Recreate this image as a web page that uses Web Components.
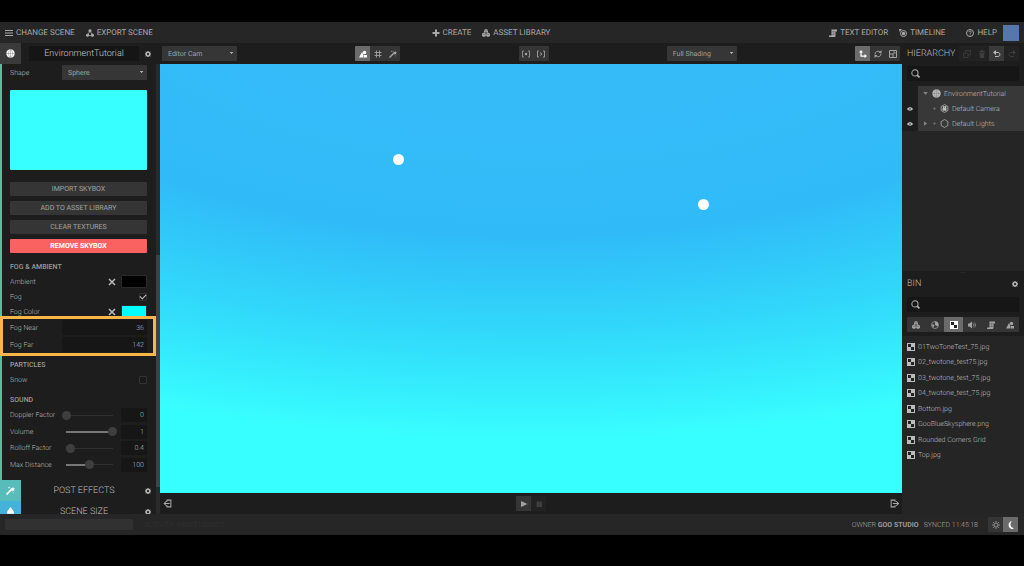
<!DOCTYPE html>
<html lang="en">
<head>
<meta charset="utf-8">
<title>EnvironmentTutorial</title>
<style>
  html, body { margin: 0; background: #000; }
  body { font: 8px/12px Roboto, sans-serif; color: #a8a8a8; text-rendering: geometricPrecision; }
</style>
</head>
<body>
<scene-editor></scene-editor>
<script>
const BASE = `
  :host, *, *::before, *::after { box-sizing: border-box; }
  button, input, select { font: inherit; text-rendering: inherit; color: inherit; margin: 0; padding: 0; border: 0; border-radius: 0; background: none; appearance: none; outline: 0; }
  ul { list-style: none; margin: 0; padding: 0; }
  h2, h3 { margin: 0; font-weight: 400; }
  a { color: inherit; text-decoration: none; }
`;
function define(tag, css, html) {
  customElements.define(tag, class extends HTMLElement {
    constructor() {
      super();
      this.attachShadow({ mode: 'open' });
    }
    connectedCallback() {
      const t = document.createElement('template');
      t.innerHTML = '<style>' + BASE + css + '</style>' + (typeof html === 'function' ? html(this) : html);
      this.shadowRoot.replaceChildren(t.content.cloneNode(true));
    }
  });
}

const ICONS = {
  menu: '<path d="M0 2h16v2H0zM0 7h16v2H0zM0 12h16v2H0z"/>',
  triad: '<path d="M8 3L3 13h10z" fill="none" stroke="currentColor" stroke-width="1.5"/><path d="M8 0l3 2v3L8 7 5 5V2zM3 9l3 2v3l-3 2-3-2v-3zM13 9l3 2v3l-3 2-3-2v-3z"/>',
  plus: '<path d="M6 1h4v5h5v4h-5v5H6v-5H1V6h5z"/>',
  boxes: '<path d="M8 0l4 2v5H4V2zM4 7l4 2v5l-4 2-4-2V9zM12 7l4 2v5l-4 2-4-2V9z"/><path d="M4 3l4 1 4-1M1 10l3 1 4-2 4 2 3-1M8 9v6" fill="none" stroke="#333" stroke-width=".8"/>',
  script: '<path d="M5 1h11v4h-3v8c0 2-1 3-3 3H0v-3h5z"/><path d="M7 5h4M7 8h4M7 11h4" stroke="#333" stroke-width="1"/>',
  timeline: '<circle cx="9" cy="9" r="6" fill="none" stroke="currentColor" stroke-width="2"/><circle cx="9" cy="9" r="3.500"/><path d="M0 0h6L1 6z"/>',
  help: '<circle cx="8" cy="8" r="7" fill="none" stroke="currentColor" stroke-width="2"/><path d="M5.500 6.500c0-3.500 5-3.500 5 0 0 2-2.500 1.500-2.500 3.500M8 11v2" fill="none" stroke="currentColor" stroke-width="1.700"/>',
  globe: '<circle cx="8" cy="8" r="7.500"/><path d="M8 0v16M0 8h16M8 0C3 5 3 11 8 16M8 0c5 5 5 11 0 16" fill="none" stroke="#777" stroke-width=".8"/>',
  gear: '<circle cx="8" cy="8" r="5" fill="none" stroke="currentColor" stroke-width="4"/><path d="M8 0v3M8 13v3M0 8h3M13 8h3M2 2l3 3M11 11l3 3M14 2l-3 3M2 14l3-3" stroke="currentColor" stroke-width="2.500"/>',
  shapes: '<path d="M0 15L6 4l3 6v5zM10 15v-5h6v5z"/><circle cx="11" cy="5" r="3.500"/>',
  grid: '<path d="M5 1v14M11 1v14M1 5h14M1 11h14" stroke="currentColor" stroke-width="1.800"/>',
  wand: '<path d="M1 15L10 6" stroke="currentColor" stroke-width="3"/><path d="M8 3l3 1 2-3 0 3 3 0-2 2 1 3-3-1-1 2-1-3z"/><path d="M4 3h3M12 12h2M5.500 1v3" stroke="currentColor"/>',
  snapdot: '<path d="M4 2H1v12h3M12 2h3v12h-3" fill="none" stroke="currentColor" stroke-width="1.600"/><circle cx="8" cy="8" r="2.500"/>',
  snapnext: '<path d="M4 2H1v12h3M12 2h3v12h-3M6 5l4 3-4 3" fill="none" stroke="currentColor" stroke-width="1.800"/>',
  move: '<path d="M4 3v9h9" fill="none" stroke="currentColor" stroke-width="2.500"/><path d="M0 5l4-5 4 5zM11 8l5 4-5 4z"/>',
  rotate: '<path d="M2 9a6 6 0 0 1 10-5M14 7a6 6 0 0 1-10 5" fill="none" stroke="currentColor" stroke-width="2"/><path d="M9 6h6V0zM7 10H1v6z"/>',
  scale: '<path d="M1 1h14v14H1zM1 8h7v7" fill="none" stroke="currentColor" stroke-width="2"/><path d="M7 9l4-4M8 4h4v4" fill="none" stroke="currentColor" stroke-width="1.500"/>',
  copy: '<path d="M1 6h9v9H1zM5 6V1h10v9h-5" fill="none" stroke="currentColor" stroke-width="1.600"/>',
  trash: '<path d="M2 2h4V0h4v2h4v2H2zM3 5h10l-1 11H4z"/>',
  undo: '<path d="M2 5h8c5 0 5 8 0 8H4" fill="none" stroke="currentColor" stroke-width="2"/><path d="M6 0v10L0 5z"/>',
  redo: '<path d="M14 5H6c-5 0-5 8 0 8h6" fill="none" stroke="currentColor" stroke-width="2"/><path d="M10 0v10l6-5z"/>',
  search: '<circle cx="7" cy="7" r="5.500" fill="none" stroke="currentColor" stroke-width="1.800"/><path d="M11 11l4 4" stroke="currentColor" stroke-width="3"/>',
  eye: '<path d="M0 8c4-6 12-6 16 0-4 6-12 6-16 0z"/><circle cx="8" cy="8" r="2" fill="#1d1d1d"/>',
  down: '<path d="M1 3h14L8 13z"/>',
  right: '<path d="M3 1v14l10-7z"/>',
  dot: '<circle cx="8" cy="8" r="6"/>',
  camera: '<path d="M8 1l6 3.500v7L8 15l-6-3.500v-7z" fill="none" stroke="currentColor" stroke-width="1.300"/><path d="M4.500 7h7v5h-7z"/><circle cx="6.500" cy="5.500" r="1.800"/><circle cx="9.800" cy="5.500" r="1.800"/>',
  hex: '<path d="M8 1l6 3.500v7L8 15l-6-3.500v-7z" fill="none" stroke="currentColor" stroke-width="1.300"/>',
  sphere: '<circle cx="8" cy="8" r="7" fill="none" stroke="currentColor" stroke-width="1.500"/><path d="M8 1c7 0 8 6 5 10L8 8zM3 6l4 2-2 5c-3-2-3-5-2-7z"/>',
  check: '<path d="M0 0h16v16H0z"/><path d="M2 2h6v6H2zM8 8h6v6H8z" fill="#222"/>',
  sound: '<path d="M0 5h3l5-4v14l-5-4H0z"/><path d="M10 5c2 2 2 4 0 6M12 3c4 3 4 7 0 10" fill="none" stroke="currentColor" stroke-width="1.600"/>',
  enter: '<path d="M7 5V2h7v12H7v-3M12 8H2M6 4L2 8l4 4" fill="none" stroke="currentColor" stroke-width="1.800"/>',
  exit: '<path d="M9 5V2H2v12h7v-3M5 8h10M11 4l4 4-4 4" fill="none" stroke="currentColor" stroke-width="1.800"/>',
  play: '<path d="M2 2v12l13-6z"/>',
  stop: '<path d="M3 3h11v11H3z"/>',
  sun: '<circle cx="8" cy="8" r="4" fill="none" stroke="currentColor" stroke-width="1.800"/><path d="M8 0v3M8 13v3M0 8h3M13 8h3M2 2l2 2M12 12l2 2M14 2l-2 2M2 14l2-2" stroke="currentColor" stroke-width="1.600"/>',
  moon: '<path d="M10 0C1 1 1 15 10 16c2 0 3-1 4-2-8 0-9-10-4-14z"/>',
  cross: '<path d="M2 2l12 12M14 2L2 14" stroke="currentColor" stroke-width="3"/>',
  tent: '<path d="M8 0c2 4 7 6 6 12H2C1 6 6 4 8 0z"/>'
};
define('ed-icon', `
  :host { display: inline-block; flex: none; width: var(--s, 9px); height: var(--s, 9px); }
  svg { display: block; width: 100%; height: 100%; fill: currentColor; }`,
  el => `<svg viewBox="0 0 16 16" aria-hidden="true">${ICONS[el.getAttribute('name')]}</svg>`);

define('ed-menu-link', `
  :host { display: block; --s: 8px; }
  a { display: flex; align-items: center; gap: 3px; height: 21px; white-space: nowrap; color: #a8a8a8; }`,
  el => `<a href="#"><ed-icon name="${el.getAttribute('icon')}"></ed-icon><slot></slot></a>`);

define('ed-topbar', `
  :host { display: flex; justify-content: space-between; height: 21px; padding: 0 5px; background: #262626; }
  nav { display: flex; align-items: center; gap: 11px; }
  .help { margin-left: 10px; }
  .user { width: 16px; height: 16px; background: #5577ad; margin-left: -5px; }`,
  `<nav><ed-menu-link icon="menu">CHANGE SCENE</ed-menu-link><ed-menu-link icon="triad">EXPORT SCENE</ed-menu-link></nav>
   <nav><ed-menu-link icon="plus">CREATE</ed-menu-link><ed-menu-link icon="boxes">ASSET LIBRARY</ed-menu-link></nav>
   <nav><ed-menu-link icon="script">TEXT EDITOR</ed-menu-link><ed-menu-link icon="timeline">TIMELINE</ed-menu-link><ed-menu-link class="help" icon="help">HELP</ed-menu-link><button class="user" aria-label="Account"></button></nav>`);

/* icons="a b c": a leading * marks the pressed tool, a leading - a disabled one */
define('ed-tools', `
  :host { display: flex; height: 15px; background: #353535; border-radius: 1px; overflow: hidden; }
  :host([flat]) { background: #222; }
  button { flex: 1 0 15px; height: 15px; display: grid; place-items: center; --s: 8px; color: #a2a2a2; }
  .on { background: #6b6b6b; color: #fff; }
  :host([flat]) .on { background: #3a3a3a; color: #bbb; }
  button:disabled { color: #3d3d3d; background: #222; }`,
  el => el.getAttribute('icons').split(' ').map(n => {
    const name = n.replace(/^[*-]/, '');
    return `<button aria-label="${name}" ${n[0] === '*' ? 'class="on"' : n[0] === '-' ? 'disabled' : ''}><ed-icon name="${name}"></ed-icon></button>`;
  }).join(''));

define('ed-select', `
  :host { display: block; height: 15px; }
  label { display: flex; align-items: center; font-weight: 300; color: #b4b4b4; font-size: 7px; }
  label span { width: 52px; }
  select { display: block; flex: 1; min-width: 0; height: 15px; padding: 1px 12px 0 6px; border-radius: 1px; font-size: 7px; font-weight: 400; line-height: 14px; color: #a0a0a0;
    background: linear-gradient(#aaa, #aaa) right 5px top 7px / 1px 1px no-repeat, linear-gradient(#aaa, #aaa) right 4px top 6px / 3px 1px no-repeat, #363636; }`,
  el => `<label>${el.hasAttribute('labelled') ? `<span>${el.getAttribute('label')}</span>` : ''}<select aria-label="${el.getAttribute('label')}"><option>${el.getAttribute('value')}</option></select></label>`);

define('ed-heading', `
  :host { display: block; }
  h3 { font-size: 7px; line-height: 14px; font-weight: 500; color: #9a9a9a; }`,
  '<h3><slot></slot></h3>');

const ROW = `
  :host { display: flex; align-items: center; height: 15px; font-size: 7px; font-weight: 300; color: #b4b4b4; }
  label { width: 52px; flex: none; white-space: nowrap; }`;

define('ed-number', ROW + `
  :host { height: 17px; }
  input { flex: 1; min-width: 0; height: 15px; padding-right: 3px; text-align: right; background: #161616; border-radius: 1px; }`,
  el => `<label for="v">${el.getAttribute('label')}</label><input id="v" value="${el.getAttribute('value')}">`);

define('ed-check', ROW + `
  :host { justify-content: space-between; }
  input { position: relative; width: 8px; height: 8px; border: 1px solid #343434; border-radius: 1px; background: #1a1a1a; }
  input:checked::after { content: ""; position: absolute; left: 0; top: 0; width: 6px; height: 4px; border: solid #c4c4c4; border-width: 0 0 1px 1px; transform: rotate(-45deg); }`,
  el => `<label for="v">${el.getAttribute('label')}</label><input id="v" type="checkbox" ${el.hasAttribute('checked') ? 'checked' : ''}>`);

define('ed-color', ROW + `
  label { flex: 1; }
  button { display: grid; place-items: center; width: 8px; height: 8px; margin-right: 5px; --s: 8px; color: #bbb; }
  input { width: 26px; height: 13px; border: 1px solid #2c2c2c; border-radius: 1px; }
  input::-webkit-color-swatch-wrapper { padding: 0; }
  input::-webkit-color-swatch { border: 0; }`,
  el => `<label for="v">${el.getAttribute('label')}</label><button aria-label="Reset"><ed-icon name="cross"></ed-icon></button><input id="v" type="color" value="${el.getAttribute('value')}">`);

define('ed-slider', ROW + `
  :host { height: auto; }
  input[type=range] { width: 55px; height: 12px; margin-right: 4px;
    background: linear-gradient(#777, #777) 4px center / calc(46px * var(--p)) 2px no-repeat, linear-gradient(#303030, #303030) center / 46px 1px no-repeat; }
  input::-webkit-slider-thumb { appearance: none; width: 9px; height: 9px; border-radius: 50%; background: #3e3e3e; }
  .num { flex: 1; min-width: 0; height: 14px; padding-right: 3px; text-align: right; background: #161616; border-radius: 1px; }`,
  el => {
    const l = el.getAttribute('label'), p = el.getAttribute('at');
    return `<label for="r">${l}</label><input id="r" type="range" min="0" max="100" value="${p}" style="--p:${p / 100}"><input class="num" aria-label="${l} value" value="${el.getAttribute('value')}">`;
  });

define('ed-section-bar', `
  :host { display: flex; align-items: center; height: 21px; flex: none; background: #1d1d1d; }
  .tile { width: 21px; height: 21px; flex: none; display: grid; place-items: center; color: #fff; background: var(--tile, #3a3a3a); --s: 9px; }
  h2 { flex: 1; margin-left: 8px; font-size: 9px; font-weight: 300; line-height: 17px; padding-top: 2px; text-align: center; color: #bebebe; white-space: nowrap; }
  :host([boxed]) h2 { line-height: 13px; background: #151515; color: #c8c8c8; }
  .gear { width: 6px; height: 6px; margin: 0 5px 0 6px; display: grid; --s: 6px; color: #b5b5b5; }`,
  el => `<span class="tile"><ed-icon name="${el.getAttribute('icon')}"></ed-icon></span><h2><slot></slot></h2><button class="gear" aria-label="Options"><ed-icon name="gear"></ed-icon></button>`);

define('ed-inspector', `
  :host { display: grid; grid-template-columns: minmax(0, 1fr) 4px; grid-template-rows: 21px minmax(0, 1fr); background: #1d1d1d; min-height: 0; }
  .head { grid-column: 1 / 3; padding-right: 4px; }
  .scroll { overflow: hidden; }
  .body { height: 416px; border-left: 2px solid #58bd9b; padding: 1px 9px 0 8px; }
  .preview { height: 80px; margin: 10px 0 12px; background: #38ffff; border-radius: 1px; }
  .actions { display: grid; gap: 5px; margin-bottom: 7px; }
  .actions button { height: 14px; font-size: 7px; line-height: 14px; background: #353535; border-radius: 1px; color: #a2a2a2; }
  .actions .danger { background: #fa6262; color: #fff; font-weight: 700; }
  .fog { position: relative; margin-bottom: 5px; }
  .mark { position: absolute; inset: -3px -9px -3px -10px; border: 3px solid #f8b548; pointer-events: none; }
  .particles { margin-bottom: 6px; }
  .sound { display: grid; grid-template-columns: minmax(0, 1fr); grid-auto-rows: 1fr; height: 66px; }
  .track { background: #2a2a2a; display: flex; flex-direction: column; }
  .thumb { margin-top: 191px; height: 232px; background: #424242; }
  .fx { --tile: #57bcba; }
  .size { --tile: #45b2dc; }`,
  `<ed-section-bar class="head" boxed icon="globe">EnvironmentTutorial</ed-section-bar>
   <div class="scroll">
     <div class="body">
       <ed-select labelled label="Shape" value="Sphere"></ed-select>
       <div class="preview"></div>
       <div class="actions"><button>IMPORT SKYBOX</button><button>ADD TO ASSET LIBRARY</button><button>CLEAR TEXTURES</button><button class="danger">REMOVE SKYBOX</button></div>
       <ed-heading>FOG &amp; AMBIENT</ed-heading>
       <ed-color label="Ambient" value="#000000"></ed-color>
       <ed-check label="Fog" checked></ed-check>
       <ed-color label="Fog Color" value="#00ffff"></ed-color>
       <div class="fog"><ed-number label="Fog Near" value="36"></ed-number><ed-number label="Fog Far" value="142"></ed-number><div class="mark"></div></div>
       <ed-heading>PARTICLES</ed-heading>
       <ed-check class="particles" label="Snow"></ed-check>
       <ed-heading>SOUND</ed-heading>
       <div class="sound">
         <ed-slider label="Doppler Factor" at="0" value="0"></ed-slider>
         <ed-slider label="Volume" at="100" value="1"></ed-slider>
         <ed-slider label="Rolloff Factor" at="8" value="0.4"></ed-slider>
         <ed-slider label="Max Distance" at="50" value="100"></ed-slider>
       </div>
     </div>
     <ed-section-bar class="fx" icon="wand">POST EFFECTS</ed-section-bar>
     <ed-section-bar class="size" icon="tent">SCENE SIZE</ed-section-bar>
   </div>
   <div class="track"><div class="thumb"></div></div>`);

define('ed-viewport', `
  :host { display: flex; flex-direction: column; min-width: 0; background: #1d1d1d; }
  .bar { display: flex; align-items: center; justify-content: space-between; height: 21px; padding: 0 2px; flex: none; }
  .cam { width: 75px; } .shade { width: 70px; }
  .sky { position: relative; flex: 1; min-height: 0; background: radial-gradient(ellipse 140% 111% at 50% -23%, #36bbf9 30%, #30bbf8 57%, #31d8fa 77%, #38ffff 100%); }
  .light { position: absolute; width: 11px; height: 11px; margin: -5px; border-radius: 50%; background: #fff; }
  .foot { display: grid; grid-template-columns: 1fr auto 1fr; align-items: center; height: 21px; padding: 0 3px; }
  .foot > button { display: grid; justify-self: start; --s: 9px; color: #a8a8a8; }
  .foot > button:last-child { justify-self: end; }`,
  `<div class="bar">
     <ed-select class="cam" label="Camera" value="Editor Cam"></ed-select>
     <ed-tools icons="*shapes grid wand"></ed-tools>
     <ed-tools icons="snapdot snapnext"></ed-tools>
     <ed-select class="shade" label="Shading" value="Full Shading"></ed-select>
     <ed-tools icons="*move rotate scale"></ed-tools>
   </div>
   <div class="sky"><span class="light" style="left:32.1%;top:22.1%"></span><span class="light" style="left:73.2%;top:32.6%"></span></div>
   <div class="foot"><button aria-label="Collapse left"><ed-icon name="enter"></ed-icon></button><ed-tools icons="play -stop"></ed-tools><button aria-label="Collapse right"><ed-icon name="exit"></ed-icon></button></div>`);

define('ed-search', `
  :host { display: flex; align-items: center; height: 15px; padding-left: 4px; background: #161616; border-radius: 1px; color: #b0b0b0; }
  input { flex: 1; min-width: 0; height: 15px; padding-left: 4px; }`,
  '<ed-icon name="search"></ed-icon><input type="search" aria-label="Search">');

define('ed-tree-row', `
  :host { display: flex; height: 15px; font-size: 7px; font-weight: 300; color: #bcbcbc; --s: 9px; }
  .eye { width: 16px; display: grid; place-items: center; --s: 6px; color: #c0c0c0; }
  .node { flex: 1; min-width: 0; display: flex; align-items: center; gap: 3px; padding-left: 3px; background: #383838; white-space: nowrap; }
  .tw { width: 8px; display: grid; justify-items: center; --s: 5px; color: #858585; }
  .bullet { width: 5px; display: grid; justify-items: center; --s: 3px; color: #777; }`,
  el => {
    const a = n => el.getAttribute(n);
    return `<span class="eye">${a('eye') !== null ? '<ed-icon name="eye"></ed-icon>' : ''}</span>
      <span class="node"><span class="tw">${a('twist') ? `<ed-icon name="${a('twist')}"></ed-icon>` : ''}</span>${a('eye') !== null ? '<span class="bullet"><ed-icon name="dot"></ed-icon></span>' : ''}<ed-icon name="${a('icon')}"></ed-icon><slot></slot></span>`;
  });

define('ed-panel-title', `
  :host { display: flex; align-items: center; justify-content: space-between; height: 21px; }
  h2 { font-size: 9px; font-weight: 300; line-height: 19px; color: #bebebe; padding-top: 2px; }`,
  '<h2><slot></slot></h2><slot name="end"></slot>');

define('ed-sidebar', `
  :host { display: flex; flex-direction: column; min-width: 0; background: #252525; }
  .tree { height: 228px; }
  .top { background: #1d1d1d; }
  .pad { padding: 0 5px; }
  .search { margin: 2px 5px 5px; }
  .bin { background: #1d1d1d; padding: 1px 5px 5px; height: 65px; }
  .bin ed-search { margin: 3px 0 5px; }
  .grip { text-align: center; color: #444; font-size: 7px; line-height: 2px; height: 1px; }
  .gear { display: grid; --s: 6px; color: #b5b5b5; margin-right: 1px; }
  ul { display: grid; grid-auto-rows: 1fr; height: 124px; margin-top: 3px; padding-left: 5px; font-size: 7px; font-weight: 300; color: #bcbcbc; --s: 8px; }
  li { display: flex; align-items: center; gap: 3px; white-space: nowrap; }`,
  `<section class="tree"><div class="top">
     <ed-panel-title class="pad">HIERARCHY<ed-tools slot="end" flat icons="-copy -trash *undo -redo"></ed-tools></ed-panel-title>
     <ed-search class="search"></ed-search>
     <ed-tree-row twist="down" icon="globe">EnvironmentTutorial</ed-tree-row>
     <ed-tree-row eye icon="camera">Default Camera</ed-tree-row>
     <ed-tree-row eye twist="right" icon="hex">Default Lights</ed-tree-row>
   </div></section>
   <section><div class="bin">
     <div class="grip">···</div>
     <ed-panel-title>BIN<button class="gear" slot="end" aria-label="Bin options"><ed-icon name="gear"></ed-icon></button></ed-panel-title>
     <ed-search></ed-search>
     <ed-tools icons="boxes sphere *check sound script shapes"></ed-tools>
   </div>
   <ul>${['01TwoToneTest_75.jpg', '02_twotone_test75.jpg', '03_twotone_test_75.jpg', '04_twotone_test_75.jpg', 'Bottom.jpg', 'GooBlueSkysphere.png', 'Rounded Corners Grid', 'Top.jpg'].map(f => `<li><ed-icon name="check"></ed-icon>${f}</li>`).join('')}</ul></section>`);

define('ed-status', `
  :host { display: flex; align-items: center; height: 21px; padding: 0 6px 0 5px; background: #262626; font-size: 7px; font-weight: 300; color: #a8a8a8; }
  .progress { width: 128px; height: 11px; background: #313131; border-radius: 1px; }
  .activity { flex: 1; margin-left: 11px; color: #343434; }
  b { font-weight: 700; color: #999; }
  .sync { margin: 0 10px 0 5px; }`,
  `<div class="progress"></div><span class="activity">ACTIVITY: ASSET LOADED</span><span>OWNER <b>GOO STUDIO</b></span><span class="sync">SYNCED 11:45:18</span><ed-tools icons="sun *moon"></ed-tools>`);

define('scene-editor', `
  :host { display: flex; flex-direction: column; height: 100vh; min-height: 300px; padding: 22px 0 31px; }
  main { flex: 1; min-height: 0; display: grid; grid-template-columns: 160px minmax(0, 1fr) 122px; grid-template-rows: minmax(0, 1fr); }`,
  `<ed-topbar></ed-topbar><main><ed-inspector></ed-inspector><ed-viewport></ed-viewport><ed-sidebar></ed-sidebar></main><ed-status></ed-status>`);
</script>
</body>
</html>
